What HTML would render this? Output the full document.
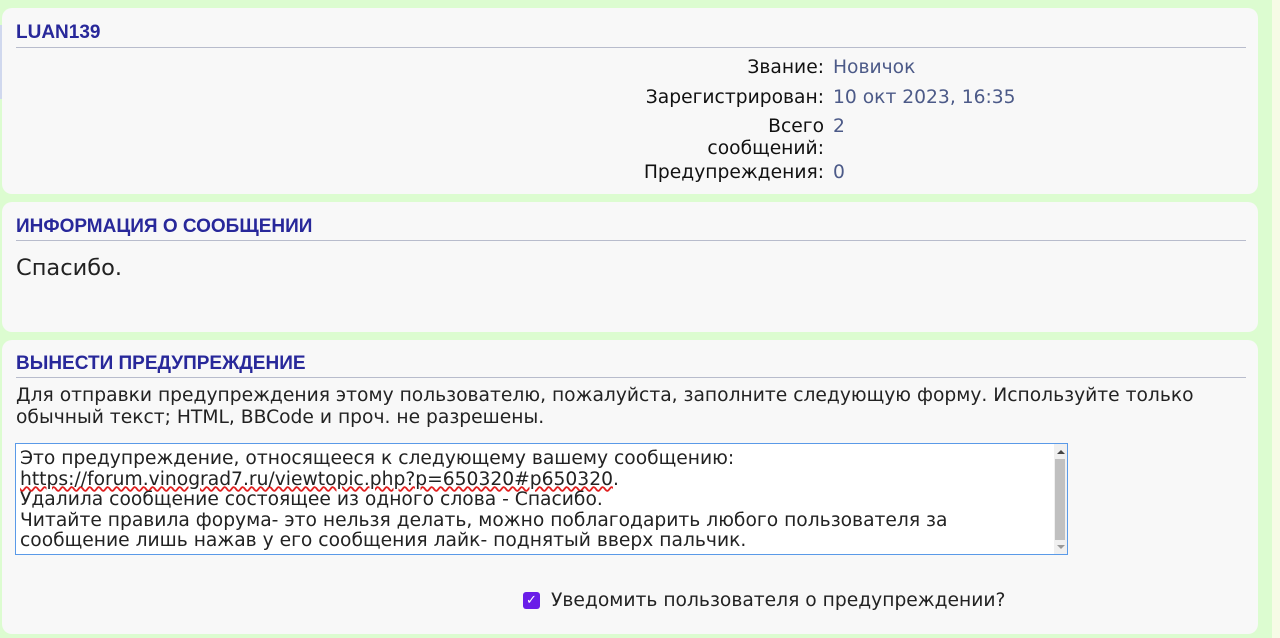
<!DOCTYPE html>
<html><head><meta charset="utf-8"><style>
*{margin:0;padding:0;box-sizing:border-box}
body{width:1280px;height:638px;background:#dcfcd0;position:relative;overflow:hidden;font-family:"DejaVu Sans","Liberation Sans",sans-serif;color:#222;font-size:18.7px}
.strip{position:absolute;right:0;top:0;width:8px;height:638px;background:#f6fbe6}
.p{position:absolute;left:2px;width:1256px;background:#f8f8f8;border-radius:10px}
.h{position:absolute;left:14px;font:bold 19px "Liberation Sans",Arial,sans-serif;color:#28289a}
.line{position:absolute;left:14px;width:1230px;height:1px;background:#b8bccc}
.t{position:absolute;white-space:nowrap}
.l{text-align:right;width:400px;left:422px;color:#111}
.v{left:831px;color:#4c5a88}
</style></head><body>
<div class="strip"></div>
<div style="position:absolute;left:0;top:25px;width:2px;height:74px;background:#d0d8ee"></div>
<div class="p" style="top:8px;height:186px">
 <div class="h" style="top:14px">LUAN139</div>
 <div class="line" style="top:39px"></div>
 <div class="t l" style="top:49px">Звание:</div><div class="t v" style="top:49px">Новичок</div>
 <div class="t l" style="top:79px">Зарегистрирован:</div><div class="t v" style="top:79px">10 окт 2023, 16:35</div>
 <div class="t l" style="top:108px">Всего</div><div class="t v" style="top:108px">2</div>
 <div class="t l" style="top:130px">сообщений:</div>
 <div class="t l" style="top:154px">Предупреждения:</div><div class="t v" style="top:154px">0</div>
</div>
<div class="p" style="top:202px;height:130px">
 <div class="h" style="top:14px">ИНФОРМАЦИЯ О СООБЩЕНИИ</div>
 <div class="line" style="top:38px"></div>
 <div class="t" style="left:14px;top:53px;font-size:22.5px">Спасибо.</div>
</div>
<div class="p" style="top:340px;height:294px">
 <div class="h" style="top:13px">ВЫНЕСТИ ПРЕДУПРЕЖДЕНИЕ</div>
 <div class="line" style="top:37px"></div>
 <div class="t" style="left:14px;top:45px;line-height:22px">Для отправки предупреждения этому пользователю, пожалуйста, заполните следующую форму. Используйте только<br>обычный текст; HTML, BBCode и проч. не разрешены.</div>
 <div style="position:absolute;left:13px;top:103px;width:1053px;height:112px;background:#fff;border:1px solid #5a9ae8">
  <div class="t" style="left:4px;top:5px;line-height:20.5px;color:#222">Это предупреждение, относящееся к следующему вашему сообщению:<br><span style="text-decoration:underline wavy #e02020">https://forum.vinograd7.ru/viewtopic.php?p=650320#p650320</span>.<br>Удалила сообщение состоящее из одного слова - Спасибо.<br>Читайте правила форума- это нельзя делать, можно поблагодарить любого пользователя за<br>сообщение лишь нажав у его сообщения лайк- поднятый вверх пальчик.</div>
  <div style="position:absolute;right:0;top:0;width:13px;height:110px;background:#f0f0f0">
   <div style="position:absolute;left:3px;top:6px;border:4px solid transparent;border-bottom:4px solid #444;border-top:0;width:0"></div>
   <div style="position:absolute;left:1px;top:15px;width:10px;height:81px;background:#c0c0c0"></div>
   <div style="position:absolute;left:3px;top:101px;border:4px solid transparent;border-top:4px solid #999;border-bottom:0;width:0"></div>
  </div>
 </div>
 <div style="position:absolute;left:521px;top:252px;width:17px;height:17px;background:#6a1de8;border-radius:3px;color:#fff;font-size:13px;line-height:17px;text-align:center;font-weight:bold">✓</div>
 <div class="t" style="left:549px;top:250px">Уведомить пользователя о предупреждении?</div>
</div>
</body></html>
